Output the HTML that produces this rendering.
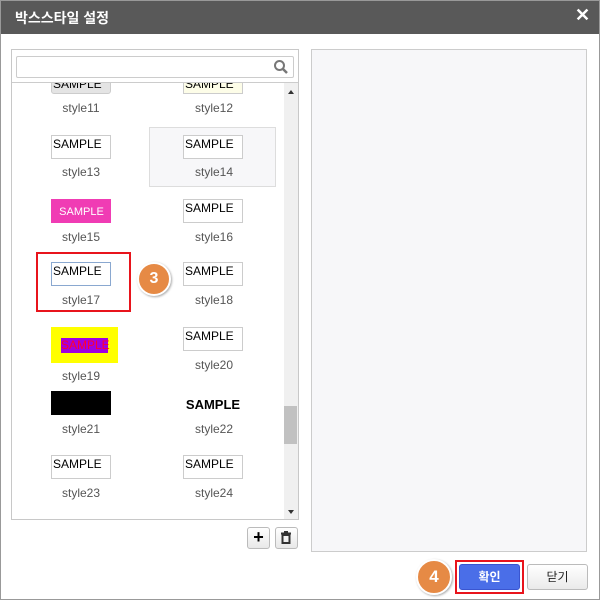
<!DOCTYPE html><html><head><meta charset="utf-8"><style>
*{margin:0;padding:0;box-sizing:border-box}
body{width:600px;height:600px;position:relative;background:#fff;font-family:"Liberation Sans","Noto Sans CJK KR",sans-serif;overflow:hidden}
.a{position:absolute}
.box{position:absolute;width:60px;height:24px;border:1px solid #ccc;background:#fff;font-size:12px;line-height:16px;padding-left:1px;color:#000;font-family:"Liberation Sans",sans-serif;white-space:nowrap;overflow:hidden}
.lab{position:absolute;width:100px;text-align:center;font-size:12px;color:#555}
</style></head><body>
<div class="a" style="left:0;top:0;width:600px;height:34px;background:#595959"></div>
<div class="a" style="left:15px;top:8px;color:#fff;font-size:14px;font-weight:bold">박스스타일 설정</div>
<div class="a" style="left:575px;top:5px;color:#fff;font-size:18px;font-weight:bold">✕</div>
<div class="a" style="left:11px;top:49px;width:288px;height:471px;border:1px solid #c8c8c8;overflow:hidden">
 <div class="a" style="left:272px;top:33px;width:15px;height:437px;background:#f0f0f0"></div>
 <div class="a" style="left:272px;top:356px;width:13px;height:38px;background:#c1c1c1"></div>
 <div class="a" style="left:276px;top:40px;border:3px solid transparent;border-bottom:4px solid #333;border-top:0"></div>
 <div class="a" style="left:276px;top:460px;border:3px solid transparent;border-top:4px solid #333;border-bottom:0"></div>
 <div class="a" style="left:137px;top:77px;width:127px;height:60px;border:1px solid #ddd;background:#f7f7f9"></div>
</div>
<div class="box" style="left:51px;top:70px;background:#e4e4e4;border-radius:3px;line-height:26px">SAMPLE</div>
<div class="box" style="left:183px;top:70px;background:#fdfde8;line-height:26px">SAMPLE</div>
<div class="a" style="left:12px;top:50px;width:270px;height:32px;background:#fff"></div>
<div class="a" style="left:16px;top:56px;width:278px;height:22px;border:1px solid #ccc;border-radius:2px"></div>
<svg class="a" style="left:273px;top:59px" width="16" height="16"><circle cx="6.5" cy="6.5" r="4.5" fill="none" stroke="#777" stroke-width="2"/><line x1="10" y1="10" x2="14" y2="14" stroke="#777" stroke-width="2.5"/></svg>
<div class="a" style="left:12px;top:82px;width:286px;height:1px;background:#ccc"></div>
<div class="lab" style="left:31px;top:101px">style11</div><div class="lab" style="left:164px;top:101px">style12</div>
<div class="box" style="left:51px;top:135px">SAMPLE</div><div class="box" style="left:183px;top:135px">SAMPLE</div>
<div class="lab" style="left:31px;top:165px">style13</div><div class="lab" style="left:164px;top:165px">style14</div>
<div class="box" style="left:51px;top:199px;background:#f03cb4;border-color:#f03cb4;color:#fff;text-align:center;line-height:24px;font-size:11px">SAMPLE</div>
<div class="box" style="left:183px;top:199px">SAMPLE</div>
<div class="lab" style="left:31px;top:230px">style15</div><div class="lab" style="left:164px;top:230px">style16</div>
<div class="a" style="left:36px;top:252px;width:95px;height:60px;border:2px solid #e8141c"></div>
<div class="box" style="left:51px;top:262px;border-color:#8aa8d0">SAMPLE</div><div class="box" style="left:183px;top:262px">SAMPLE</div>
<div class="lab" style="left:31px;top:293px">style17</div><div class="lab" style="left:164px;top:293px">style18</div>
<div class="a" style="left:137px;top:262px;width:34px;height:34px;border-radius:50%;background:#e68a45;box-shadow:1px 1px 2px #aaa;border:2px solid #fff;color:#fff;font-weight:bold;font-size:16px;text-align:center;line-height:30px">3</div>
<div class="a" style="left:51px;top:327px;width:67px;height:36px;background:#ff0"></div>
<div class="a" style="left:61px;top:338px;width:47px;height:15px;background:#a000e0;color:#ff0030;font-size:12px;line-height:15px;font-family:'Liberation Sans',sans-serif;white-space:nowrap">SAMPLE</div>
<div class="box" style="left:183px;top:327px">SAMPLE</div>
<div class="lab" style="left:31px;top:369px">style19</div><div class="lab" style="left:164px;top:358px">style20</div>
<div class="a" style="left:51px;top:391px;width:60px;height:24px;background:#000"></div>
<div class="a" style="left:163px;top:397px;width:100px;text-align:center;font-weight:bold;font-size:13px">SAMPLE</div>
<div class="lab" style="left:31px;top:422px">style21</div><div class="lab" style="left:164px;top:422px">style22</div>
<div class="box" style="left:51px;top:455px">SAMPLE</div><div class="box" style="left:183px;top:455px">SAMPLE</div>
<div class="lab" style="left:31px;top:486px">style23</div><div class="lab" style="left:164px;top:486px">style24</div>
<div class="a" style="left:247px;top:527px;width:23px;height:22px;border:1px solid #bbb;border-radius:3px;background:linear-gradient(#fff,#e8e8e8);text-align:center;font-size:18px;font-weight:bold;line-height:19px">+</div>
<div class="a" style="left:275px;top:527px;width:23px;height:22px;border:1px solid #bbb;border-radius:3px;background:linear-gradient(#fff,#e8e8e8)"></div>
<svg class="a" style="left:280px;top:531px" width="13" height="14"><rect x="1" y="1.5" width="10" height="2" fill="#333"/><rect x="4" y="0" width="4" height="2" fill="#333"/><rect x="2.5" y="4" width="7" height="8" fill="none" stroke="#333" stroke-width="2"/></svg>
<div class="a" style="left:311px;top:49px;width:276px;height:503px;border:1px solid #ccc;background:#f7f7f9"></div>
<div class="a" style="left:416px;top:559px;width:36px;height:36px;border-radius:50%;background:#e68a45;box-shadow:1px 1px 2px #aaa;border:2px solid #fff;color:#fff;font-weight:bold;font-size:17px;text-align:center;line-height:31px">4</div>
<div class="a" style="left:455px;top:560px;width:69px;height:34px;border:2px solid #e8141c"></div>
<div class="a" style="left:459px;top:564px;width:61px;height:26px;border:1px solid #3a55d0;border-radius:3px;background:#4a6ee8;color:#fff;font-size:12px;font-weight:bold;text-align:center;line-height:24px">확인</div>
<div class="a" style="left:527px;top:564px;width:61px;height:26px;border:1px solid #bbb;border-radius:3px;background:linear-gradient(#fff,#eaeaea);color:#222;font-size:12px;text-align:center;line-height:24px">닫기</div>
<div class="a" style="left:0;top:0;width:600px;height:600px;border:1px solid #999;pointer-events:none"></div>
</body></html>
